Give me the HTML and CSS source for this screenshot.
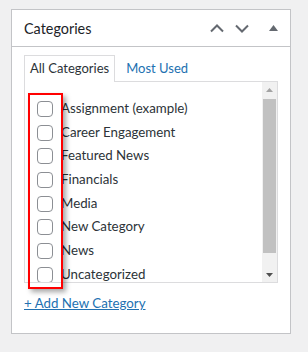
FILE: index.html
```html
<!DOCTYPE html>
<html>
<head>
	<meta charset="utf-8">
	<title>Categories</title>
	<link rel="stylesheet" href="styles.css">
</head>
<body>
	<div class="postbox">
		<div class="postbox-header">
			<h2 class="hndle">Categories</h2>
			<div class="handle-actions">
				<svg class="chev" width="14" height="9" viewBox="0 0 14 9"><path d="M1 7.5 L7 1.5 L13 7.5" fill="none" stroke="#646970" stroke-width="2"/></svg>
				<svg class="chev down" width="14" height="9" viewBox="0 0 14 9"><path d="M1 1.5 L7 7.5 L13 1.5" fill="none" stroke="#646970" stroke-width="2"/></svg>
				<svg class="toggle" width="9" height="6" viewBox="0 0 9 6"><polygon points="0,6 4.5,0 9,6" fill="#646970"/></svg>
			</div>
		</div>
		<div class="inside">
			<ul class="tabs">
				<li class="tab active">All Categories</li>
				<li class="tab"><a href="#">Most Used</a></li>
			</ul>
			<div class="tabs-panel">
				<ul class="checklist">
					<li><span class="box"></span>Assignment (example)</li>
					<li><span class="box"></span>Career Engagement</li>
					<li><span class="box"></span>Featured News</li>
					<li><span class="box"></span>Financials</li>
					<li><span class="box"></span>Media</li>
					<li><span class="box"></span>New Category</li>
					<li><span class="box"></span>News</li>
					<li><span class="box"></span>Uncategorized</li>
				</ul>
				<div class="scrollbar">
					<div class="sb-btn"><svg width="7" height="4" viewBox="0 0 7 4"><polygon points="0,4 3.5,0 7,4" fill="#a3a3a3"/></svg></div>
					<div class="sb-thumb"></div>
					<div class="sb-space"></div>
					<div class="sb-btn"><svg width="7" height="4" viewBox="0 0 7 4"><polygon points="0,0 3.5,4 7,0" fill="#505050"/></svg></div>
				</div>
			</div>
			<a class="add-new" href="#">+ Add New Category</a>
		</div>
	</div>
	<div class="highlight"></div>
</body>
</html>
```

FILE: styles.css
```css
html, body{margin: 0;}
body{background: #f0f0f1;
	padding: 9px 0 0 11px;
	font-family: 'Lato', 'Liberation Sans', sans-serif;
	font-size: 13.3px;
	color: #2c3338;}

.postbox{width: 278px;
	height: 323px;
	background: #fff;
	border: 1px solid #c3c4c7;}

.postbox-header{height: 36px;
	border-bottom: 1px solid #c3c4c7;
	display: flex;
	align-items: center;
	justify-content: space-between;
	padding: 0 12px;}
.hndle{margin: 0;
	font-size: 14.4px;
	font-weight: 400;
	color: #1d2327;}
.handle-actions{display: flex; align-items: center;}
.handle-actions .down{margin-left: 11px;}
.handle-actions .toggle{margin-left: 20px;}

.inside{padding: 8px 12px 0;}

.tabs{list-style: none;
	margin: 0;
	padding: 0;
	display: flex;
	position: relative;
	z-index: 1;
	font-size: 13px;}
.tab{padding: 4px 5px 5px;
	line-height: 17px;
	border: 1px solid transparent;
	border-bottom: none;
	margin-right: 5px;}
.tab.active{border-color: #dcdcde;
	background: #fff;
	color: #2c3338;}
.tab a{color: #2271b1; text-decoration: none;}

.tabs-panel{height: 200px;
	border: 1px solid #dcdcde;
	margin-top: -1px;
	display: flex;
	overflow: hidden;}

.checklist{flex: 1;
	list-style: none;
	margin: 0;
	padding: 15px 12px 0;
	overflow: hidden;}
.checklist li{display: flex;
	align-items: center;
	height: 23.69px;
	line-height: 23.69px;
	white-space: nowrap;}
.box{width: 14px;
	height: 14px;
	border: 1px solid #8c8f94;
	border-radius: 4px;
	background: #fff;
	margin-right: 8px;
	flex: none;}

.scrollbar{width: 15px;
	background: #f1f1f1;
	display: flex;
	flex-direction: column;}
.sb-btn{height: 15px;
	display: flex;
	align-items: center;
	justify-content: center;
	flex: none;}
.sb-thumb{height: 154px;
	margin: 2px 1px 0;
	background: #c1c1c1;
	flex: none;}
.sb-space{flex: 1;}

.add-new{display: inline-block;
	margin-top: 10px;
	line-height: 20px;
	color: #2271b1;
	text-decoration: underline;}

.highlight{position: absolute;
	left: 28px;
	top: 93px;
	width: 31px;
	height: 192px;
	border: 2px solid #f00;
	box-shadow: 3px 3px 5px rgba(0, 0, 0, 0.35);}
```
